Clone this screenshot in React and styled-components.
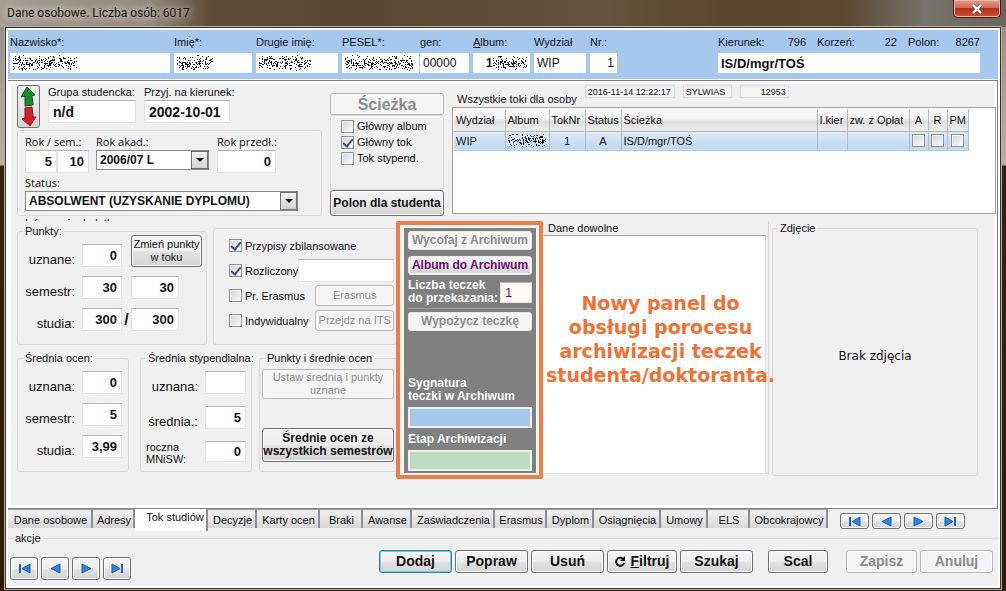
import React, { useId } from 'react';
import styled, { createGlobalStyle, css } from 'styled-components';

const GlobalStyle = createGlobalStyle`
  * {
    box-sizing: border-box;
  }
  body {
    margin: 0;
    font-family: "Liberation Sans", Arial, sans-serif;
    font-size: 11px;
    line-height: 14px;
    color: #111;
  }
  input, button, select {
    font: inherit;
    color: inherit;
    margin: 0;
  }
`;

// ---------- window frame ----------

const Frame = styled.div`
  min-height: 100vh;
  display: flex;
  flex-direction: column;
  padding: 0 5px 4px;
  background: linear-gradient(180deg, #8d8780 0, #a9a39c 100px, #b5afa8 165px, #33230f 166px, #2c1d0b 100%);
`;

const TitleBar = styled.header`
  display: flex;
  justify-content: space-between;
  align-items: flex-start;
  height: 27px;
  margin: 0 -5px;
  padding: 0 5px 0 7px;
  background: linear-gradient(90deg, #a59e95 0, #93897d 150px, #5f4c36 210px, #57452f 35%, #65533d 60%, #5a452c 72%, #5b4730 84%, #77726b 92%, #6c665e 100%);
`;

const Title = styled.h1`
  margin: 5px 0 0;
  font: 12px/16px Roboto, sans-serif;
  text-shadow: 0 0 6px #d8d2c8, 0 0 8px #d8d2c8;
`;

const CloseButton = styled.button`
  width: 48px;
  height: 18px;
  padding: 0;
  display: flex;
  justify-content: center;
  align-items: center;
  border: 1px solid #4b1a12;
  border-top: 0;
  border-radius: 0 0 5px 5px;
  background: linear-gradient(180deg, #e0a193 0, #cf6a56 45%, #b52d14 50%, #d0532f 100%);
  box-shadow: inset 0 0 0 1px #e9b3a6;
`;

const Client = styled.main`
  flex: 1;
  display: flex;
  flex-direction: column;
  border: 1px solid #333;
  outline: 1px solid #b9b1a6;
  background: #fff;
  padding: 2px;
`;

// ---------- basic controls ----------

const Input = styled.input`
  display: block;
  width: ${p => p.$w ? p.$w + 'px' : '100%'};
  height: ${p => p.$h || 23}px;
  min-width: 0;
  padding: 0 4px;
  border: 1px solid #e2e2e2;
  border-top-color: #b4b4b4;
  border-radius: 0;
  background: ${p => p.$bg || '#fff'};
  font-size: ${p => p.$size || 13}px;
  font-weight: ${p => p.$plain ? 400 : 700};
  text-align: ${p => p.$right ? 'right' : 'left'};
  outline: none;
`;

const HeaderInput = styled(Input)`
  height: 20px;
  border: 0;
  padding: 0 3px;
`;

const Button = styled.button`
  height: ${p => p.$h || 23}px;
  width: ${p => p.$w ? p.$w + 'px' : 'auto'};
  flex: none;
  padding: 0;
  border: 1px solid #707070;
  border-radius: 3px;
  background: linear-gradient(180deg, #f4f4f4 0, #eeeeee 48%, #e2e2e2 54%, #d4d4d4 100%);
  box-shadow: inset 0 0 0 1px #fafafa;
  font-size: ${p => p.$size || 12}px;
  font-weight: ${p => p.$plain ? 400 : 700};
  line-height: 13px;
  white-space: nowrap;
  ${p => p.$focus && css`
    border-color: #3c7f9b;
    box-shadow: inset 0 0 0 1px #5fd0e6;
  `}
  &:disabled {
    color: #8c8c8c;
    border-color: #b5b5b5;
    background: #f4f4f4;
  }
`;

const CheckInput = styled.input`
  appearance: none;
  position: relative;
  flex: none;
  width: 13px;
  height: 13px;
  border: 1px solid #8e8f8f;
  background: linear-gradient(135deg, #cfd3d8, #fbfbfb);
  box-shadow: inset 0 0 0 1px #f6f6f6;
  &:checked::after {
    content: "";
    position: absolute;
    left: 3px;
    top: 0;
    width: 4px;
    height: 8px;
    border: solid #3a4e86;
    border-width: 0 2px 2px 0;
    transform: rotate(40deg);
  }
`;

const CheckLabel = styled.label`
  display: flex;
  align-items: center;
  gap: 3px;
  height: 16px;
  white-space: nowrap;
`;

function Check({ label, checked }) {
  return (
    <CheckLabel>
      <CheckInput type="checkbox" defaultChecked={checked} />
      {label}
    </CheckLabel>
  );
}

const FieldBox = styled.div`
  flex: none;
  width: ${p => p.$w}px;
`;

const FieldLabel = styled.label`
  display: block;
  height: ${p => p.$h || 15}px;
  white-space: nowrap;
  ${p => p.$ui && css`
    font-family: "Open Sans", sans-serif;
  `}
`;

const SelectBox = styled.div`
  position: relative;
  width: ${p => p.$w}px;
`;

const Select = styled.select`
  appearance: none;
  display: block;
  width: 100%;
  height: 20px;
  padding: 0 20px 0 3px;
  border: 1px solid #8a8a8a;
  border-radius: 0;
  background: #fff;
  font-size: 12px;
  font-weight: 700;
`;

const SelectArrow = styled.span`
  position: absolute;
  right: 1px;
  top: 1px;
  width: 17px;
  height: 18px;
  display: flex;
  align-items: center;
  justify-content: center;
  border: 1px solid #707070;
  background: linear-gradient(180deg, #f4f4f4, #d2d2d2);
  pointer-events: none;
`;

function DropDown({ id, value, w }) {
  return (
    <SelectBox $w={w}>
      <Select id={id} defaultValue={value}>
        <option>{value}</option>
      </Select>
      <SelectArrow>
        <svg width="8" height="4" viewBox="0 0 8 4"><path d="M0 0h8L4 4z" fill="#111" /></svg>
      </SelectArrow>
    </SelectBox>
  );
}

// blurred out personal data: deterministic speckles
const ScribbleBox = styled.div`
  position: relative;
  width: 100%;
  svg {
    position: absolute;
    left: ${p => p.$left}px;
    top: 2px;
    pointer-events: none;
  }
`;

function Speckles({ w, h = 16, seed = 1 }) {
  let s = seed * 7919;
  const rnd = () => {
    s = (s * 16807) % 2147483647;
    return s / 2147483647;
  };
  let d = '';
  for (let i = 0; i < w * 4; i++) {
    const x = Math.floor(rnd() * w);
    const y = Math.floor(((rnd() + rnd()) / 2) * h);
    d += `M${x} ${y}h1v1h-1z`;
  }
  return <svg width={w} height={h} viewBox={`0 0 ${w} ${h}`} aria-hidden="true"><path d={d} fill="#1a1a1a" /></svg>;
}

// ---------- blue header ----------

const Header = styled.section`
  display: flex;
  padding: 5px 18px 6px 2px;
  background: #a6c8ef;
`;

const HeaderFields = styled.div`
  display: flex;
  gap: 4px;
`;

const PeselBox = styled.div`
  display: flex;
  gap: 1px;
`;

const KierunekBox = styled.div`
  width: 262px;
  margin-left: auto;
`;

const Codes = styled.div`
  display: grid;
  grid-template-columns: 88px 80px 1fr;
  height: 18px;
  column-gap: 11px;
`;

const Code = styled.div`
  display: flex;
  justify-content: space-between;
`;

function HeaderField({ label, value, w, seed, noise, left = 3, right, bold }) {
  const id = useId();
  return (
    <FieldBox $w={w}>
      <FieldLabel htmlFor={id} $h={18}>{label}</FieldLabel>
      <ScribbleBox $left={left}>
        <HeaderInput id={id} defaultValue={value} $plain={!bold} $size={12} $right={right} />
        {noise && <Speckles w={noise} seed={seed} />}
      </ScribbleBox>
    </FieldBox>
  );
}

// ---------- page panel ----------

const Panel = styled.section`
  display: flex;
  flex-direction: column;
  margin: 1px 0 0;
  border: solid #808080;
  border-width: 1px 1px 1px 0;
  box-shadow: inset 0 0 0 3px #fff;
  background: #f0f0f0;
  padding: 4px 1px 29px 9px;
`;

const Row = styled.div`
  display: flex;
  align-items: ${p => p.$align || 'flex-start'};
  gap: ${p => p.$gap || 0}px;
`;

const TopLeft = styled.div`
  flex: none;
  width: 305px;
`;

const StudentRow = styled(Row)`
  height: 45px;
`;

const ArrowsButton = styled.button`
  width: 23px;
  height: 43px;
  padding: 0;
  border: 1px solid #707070;
  border-radius: 3px;
  background: linear-gradient(180deg, #f4f4f4, #d4d4d4);
`;

const GroupBox = styled.div`
  border: 1px solid #d9d9d9;
  border-radius: 3px;
  box-shadow: inset 1px 1px 0 #fafafa;
`;

const YearBox = styled(GroupBox)`
  height: 86px;
  padding: 4px 7px 0;
`;

const Pair = styled.div`
  display: flex;
`;

const StatusLine = styled.div`
  margin-top: 3px;
`;

// the caption of the group below, mostly hidden under this one
const HiddenCaption = styled.div`
  height: 5px;
  padding-left: 8px;
  overflow: hidden;
`;

const PathColumn = styled.div`
  flex: none;
  display: flex;
  flex-direction: column;
  width: 114px;
  margin-top: 8px;
`;

const PathChecks = styled(GroupBox)`
  height: 75px;
  padding: 2px 10px;
`;

const TokiColumn = styled.div`
  flex: 1;
  min-width: 0;
  display: flex;
  flex-direction: column;
  height: 129px;
`;

const TokiHead = styled.div`
  display: flex;
  height: 22px;
  padding-left: 5px;
  gap: 8px;
`;

const TokiTitle = styled.h2`
  margin: 7px 0 0;
  font: inherit;
  white-space: nowrap;
`;

const Stamp = styled.output`
  flex: none;
  height: 13px;
  width: ${p => p.$w}px;
  padding: 0 2px;
  border: 1px solid #dcdcdc;
  background: #f4f4f4;
  font-size: 9px;
  line-height: 12px;
  text-align: ${p => p.$right ? 'right' : 'left'};
  white-space: nowrap;
`;

const TableBox = styled.div`
  flex: 1;
  padding: 1px 0 0 1px;
  border: 1px solid #a0a0a0;
  background: #fff;
`;

const Table = styled.table`
  width: 514px;
  table-layout: fixed;
  border-collapse: collapse;
  th, td {
    overflow: hidden;
    white-space: nowrap;
    padding: 0 2px;
    border-right: 1px solid #b4bac0;
  }
  th {
    height: 22px;
    font-weight: 400;
    text-align: left;
    border-bottom: 1px solid #b8b8b8;
    background: linear-gradient(180deg, #fafafa 0, #f2f2f2 45%, #dedede 55%, #ececec 100%);
  }
  td {
    height: 19px;
    border-bottom: 1px solid #a9c6e4;
    background: linear-gradient(180deg, #dfeaf6, #bdd7f0);
  }
  th.mid, td.mid {
    text-align: center;
  }
  input, svg {
    display: block;
    margin: 0 auto;
  }
`;

// ---------- lower half ----------

const Lower = styled.div`
  display: flex;
  align-items: flex-start;
`;

const LeftZone = styled.div`
  flex: none;
  width: 379px;
  padding-top: 3px;
  overflow: hidden;
`;

const Group = styled.fieldset`
  flex: none;
  width: ${p => p.$w}px;
  height: ${p => p.$h}px;
  min-width: 0;
  margin: 0 0 0 ${p => p.$ml || 0}px;
  padding: 0 ${p => p.$px === undefined ? 5 : p.$px}px;
  border: 1px solid #d9d9d9;
  border-radius: 3px;
`;

const Legend = styled.legend`
  height: 14px;
  margin-left: ${p => p.$ml || 0}px;
  padding: 0 2px;
  white-space: nowrap;
`;

const PointsGrid = styled.div`
  display: grid;
  grid-template-columns: ${p => p.$cols};
  row-gap: ${p => p.$gap || 9}px;
  margin-top: 6px;
`;

const BigLabel = styled.label`
  align-self: end;
  padding-right: 7px;
  font-size: 13px;
  line-height: 15px;
  text-align: right;
  white-space: nowrap;
`;

const SmallLabel = styled.label`
  align-self: center;
  line-height: 12px;
`;

const Slash = styled.span`
  width: 9px;
  align-self: center;
  font-size: 16px;
  font-weight: 700;
  text-align: center;
`;

const PointsButton = styled(Button)`
  align-self: end;
  margin-top: -9px;
`;

const OptionsBox = styled(GroupBox)`
  width: 190px;
  height: 117px;
  margin-top: 4px;
  padding: 4px 0 0 15px;
`;

const OptionRow = styled.div`
  display: flex;
  align-items: center;
  justify-content: space-between;
  height: 25px;
  padding-right: 2px;
`;

const AveragesRow = styled(Row)`
  margin-top: 6px;
`;

const AverageButtons = styled.div`
  display: flex;
  flex-direction: column;
  justify-content: space-between;
  height: 97px;
  padding-top: 4px;
`;

const Highlight = styled.section`
  flex: none;
  position: relative;
  width: 147px;
  height: 258px;
  padding: 3px 3px 2px 4px;
  border: 4px solid #f07c48;
  border-radius: 2px;
  background: #f4f4f0;
`;

const Archive = styled.div`
  display: flex;
  flex-direction: column;
  height: 100%;
  padding: 3px 4px 2px;
  background: #808080;
  color: #fff;
  font-size: 12px;
  font-weight: 700;
  line-height: 13px;
  white-space: nowrap;
`;

const ArchiveButton = styled(Button)`
  width: 100%;
  height: 19px;
  border-color: #e8e8e8;
  color: #6c0a72;
  &:disabled {
    border-color: #e8e8e8;
  }
`;

const ArchiveTop = styled.div`
  display: flex;
  flex-direction: column;
  gap: 6px;
  height: 78px;
  border-bottom: 1px solid #9a9a9a;
  margin-bottom: 3px;
`;

const FolderCount = styled.div`
  display: flex;
  align-items: center;
  justify-content: space-between;
  margin-top: -2px;
`;

const FolderInput = styled(Input)`
  color: #6c0a72;
  background: #fffaf2;
`;

const ArchiveBottom = styled.div`
  margin-top: auto;
`;

const ArchiveInput = styled(Input)`
  height: 21px;
  margin: 4px 0 5px;
  border: 2px solid #f0f0f0;
  &:last-child {
    margin-bottom: 0;
  }
`;

const FreeData = styled.section`
  flex: none;
  width: 226px;
  height: 253px;
  border-right: 1px solid #d9d9d9;
  border-bottom: 1px solid #d9d9d9;
`;

const SideTitle = styled.h2`
  height: 14px;
  margin: 0;
  padding-left: 5px;
  font: inherit;
`;

const FreeArea = styled.div`
  display: flex;
  justify-content: center;
  height: 239px;
  margin-right: 2px;
  border: 1px solid #a0a0a0;
  border-color: #a0a0a0 #e0e0e0 #e0e0e0 #fff;
  background: #fff;
  padding: 55px 0 0 12px;
`;

const Note = styled.p`
  margin: 0;
  flex: none;
  z-index: 1;
  font: bold 19px/24px "DejaVu Sans", Verdana, sans-serif;
  color: #ee7136;
  text-align: center;
  white-space: nowrap;
`;

const PhotoText = styled.p`
  margin: 112px 0 0;
  font: 12px/18px "DejaVu Sans", sans-serif;
  text-align: center;
`;

// ---------- tabs and actions ----------

const Footer = styled.footer`
  flex: 1;
  background: #f0f0f0;
`;

const TabRow = styled.div`
  display: flex;
  align-items: flex-start;
  justify-content: space-between;
  height: 22px;
`;

const Tabs = styled.nav`
  display: flex;
`;

const Tab = styled.button`
  width: ${p => p.$w}px;
  height: ${p => p.$active ? 22 : 19}px;
  padding: ${p => p.$active ? '0 2px 6px 11px' : '1px 1px 0 3px'};
  border: 0;
  border-right: 2px solid #8d8d96;
  border-top: ${p => p.$active ? 0 : '1px solid #a0a0a0'};
  background: ${p => p.$active ? '#fff' : 'linear-gradient(180deg, #f0f0f0 0, #e6e6e6 50%, #d6d6d8 100%)'};
  white-space: nowrap;
`;

const Actions = styled.fieldset`
  display: flex;
  justify-content: space-between;
  min-width: 0;
  margin: 0;
  padding: 4px 5px 6px 2px;
  border: 0;
  border-top: 1px solid #d9d9d9;
`;

const NavGroup = styled.div`
  display: flex;
  gap: 3px;
  margin: ${p => p.$bottom ? '8px 0 0' : '4px 33px 0 0'};
`;

const NavButton = styled(Button)`
  display: flex;
  align-items: center;
  justify-content: center;
`;

const ActionButtons = styled.div`
  display: flex;
  gap: 3px;
  padding-top: 1px;
`;

const ActionButton = styled(Button)`
  margin-left: ${p => p.$ml || 0}px;
  svg {
    vertical-align: -1px;
    margin-right: 5px;
  }
`;

const navPaths = {
  'Pierwszy': ['M1 1h2v9h-2z', 'M12 1v9L4 5.500z'],
  'Poprzedni': ['', 'M11 1v9L2 5.500z'],
  'Następny': ['', 'M2 1v9L11 5.500z'],
  'Ostatni': ['M10 1h2v9h-2z', 'M1 1v9L9 5.500z'],
};

function Navigator({ bottom }) {
  return (
    <NavGroup $bottom={bottom}>
      {Object.keys(navPaths).map(name => (
        <NavButton key={name} aria-label={name} $w={bottom ? 28 : 29} $h={bottom ? 23 : 16}>
          <svg width="13" height="11" viewBox="0 0 13 11">
            <path d={navPaths[name][0]} fill="#1c66b4" />
            <path d={navPaths[name][1]} fill="#2f86d6" stroke="#1b5ea8" strokeWidth="1" strokeLinejoin="round" />
          </svg>
        </NavButton>
      ))}
    </NavGroup>
  );
}

const tabs = [
  ['Dane osobowe', 85], ['Adresy', 42], ['Tok studiów', 73], ['Decyzje', 49], ['Karty ocen', 63],
  ['Braki', 43], ['Awanse', 49], ['Zaświadczenia', 83], ['Erasmus', 52], ['Dyplom', 47],
  ['Osiągnięcia', 67], ['Umowy', 47], ['ELS', 42], ['Obcokrajowcy', 78],
];

const columns = [
  ['Wydział', 51], ['Album', 44], ['TokNr', 36], ['Status', 36], ['Ścieżka', 196],
  ['I.kier', 30], ['zw. z Opłat', 62], ['A', 19], ['R', 19], ['PM', 21],
];

function TextField({ label, value, w, size, right, ui }) {
  const id = useId();
  return (
    <FieldBox $w={w}>
      <FieldLabel htmlFor={id} $ui={ui}>{label}</FieldLabel>
      <Input id={id} defaultValue={value} $size={size} $right={right} />
    </FieldBox>
  );
}

function TokiTable() {
  return (
    <Table>
      <colgroup>
        {columns.map(([name, w]) => <col key={name} width={w} />)}
      </colgroup>
      <thead>
        <tr>
          {columns.map(([name], i) => <th key={name} className={i > 6 ? 'mid' : ''}>{name}</th>)}
        </tr>
      </thead>
      <tbody>
        <tr>
          <td>WIP</td>
          <td><Speckles w={38} h={15} seed={9} /></td>
          <td className="mid">1</td>
          <td className="mid">A</td>
          <td>IS/D/mgr/TOŚ</td>
          <td />
          <td />
          <td><CheckInput type="checkbox" aria-label="A" /></td>
          <td><CheckInput type="checkbox" aria-label="R" /></td>
          <td><CheckInput type="checkbox" aria-label="PM" /></td>
        </tr>
      </tbody>
    </Table>
  );
}

function ArchivePanel() {
  return (
    <Highlight>
      <Archive>
        <ArchiveTop>
          <ArchiveButton disabled>Wycofaj z Archiwum</ArchiveButton>
          <ArchiveButton>Album do Archiwum</ArchiveButton>
          <FolderCount>
            <label htmlFor="teczki">Liczba teczek<br />do przekazania:</label>
            <FolderInput id="teczki" defaultValue="1" $w={32} $h={21} $plain />
          </FolderCount>
        </ArchiveTop>
        <ArchiveButton disabled>Wypożycz teczkę</ArchiveButton>
        <ArchiveBottom>
          <label htmlFor="sygnatura">Sygnatura<br />teczki w Archiwum</label>
          <ArchiveInput id="sygnatura" $bg="#a6c8ef" />
          <label htmlFor="etap">Etap Archiwizacji</label>
          <ArchiveInput id="etap" $bg="#bedcc0" />
        </ArchiveBottom>
      </Archive>
    </Highlight>
  );
}

export default function App() {
  return (
    <Frame>
      <GlobalStyle />
      <TitleBar>
        <Title>Dane osobowe. Liczba osób: 6017</Title>
        <CloseButton aria-label="Zamknij">
          <svg width="12" height="10" viewBox="0 0 12 10">
            <path d="M2 1l8 8M10 1l-8 8" stroke="#6b2a20" strokeWidth="4" />
            <path d="M2 1l8 8M10 1l-8 8" stroke="#fff" strokeWidth="2.500" />
          </svg>
        </CloseButton>
      </TitleBar>
      <Client>
        <Header>
          <HeaderFields>
            <HeaderField label="Nazwisko*:" w={160} noise={64} seed={2} />
            <HeaderField label="Imię*:" w={78} noise={36} seed={3} />
            <HeaderField label="Drugie imię:" w={82} noise={52} seed={4} />
            <PeselBox>
              <HeaderField label="PESEL*:" w={77} noise={68} seed={5} />
              <HeaderField label="gen:" w={49} value="00000" />
            </PeselBox>
            <HeaderField label={<><u>A</u>lbum:</>} w={57} value="   1" noise={34} seed={6} left={20} bold />
            <HeaderField label="Wydział" w={52} value="WIP" />
            <HeaderField label="Nr.:" w={27} value="1" right />
          </HeaderFields>
          <KierunekBox>
            <Codes>
              <Code><label htmlFor="kierunek">Kierunek:</label><span>796</span></Code>
              <Code><span>Korzeń:</span><span>22</span></Code>
              <Code><span>Polon:</span><span>8267</span></Code>
            </Codes>
            <HeaderInput id="kierunek" defaultValue="IS/D/mgr/TOŚ" />
          </KierunekBox>
        </Header>

        <Panel>
          <Row $gap={8}>
            <TopLeft>
              <StudentRow $gap={8}>
                <ArrowsButton aria-label="Zmień grupę">
                  <svg width="21" height="41" viewBox="0 0 21 41">
                    <path d="M9 1l8 8-3 1 1 9-8 1 0-10-4 1z" fill="#1c8a2c" stroke="#0b5a18" />
                    <path d="M7 22l7-1 1 10 3 0-6 9-8-7 3-1z" fill="#d01f26" stroke="#8e1014" />
                  </svg>
                </ArrowsButton>
                <TextField label="Grupa studencka:" value="n/d" w={88} size={14} />
                <TextField label="Przyj. na kierunek:" value="2002-10-01" w={86} size={14} />
              </StudentRow>
              <YearBox>
                <Row $gap={7}>
                  <FieldBox $w={64}>
                    <FieldLabel htmlFor="rok" $ui>Rok / sem.:</FieldLabel>
                    <Pair>
                      <Input id="rok" defaultValue="5" $w={32} $right />
                      <Input aria-label="Semestr" defaultValue="10" $w={32} $right />
                    </Pair>
                  </FieldBox>
                  <FieldBox $w={114}>
                    <FieldLabel htmlFor="akad" $ui>Rok akad.:</FieldLabel>
                    <DropDown id="akad" value="2006/07 L" w={113} />
                  </FieldBox>
                  <TextField label="Rok przedł.:" value="0" w={59} right ui />
                </Row>
                <StatusLine>
                  <FieldLabel htmlFor="status" $ui>Status:</FieldLabel>
                  <DropDown id="status" value="ABSOLWENT (UZYSKANIE DYPLOMU)" w={273} />
                </StatusLine>
              </YearBox>
              <HiddenCaption>Informacje dodatkowe</HiddenCaption>
            </TopLeft>

            <PathColumn>
              <Button disabled $size={16} $h={22}>Ścieżka</Button>
              <PathChecks>
                <Check label="Główny album" />
                <Check label="Główny tok" checked />
                <Check label="Tok stypend." />
              </PathChecks>
              <Button $h={26}>Polon dla studenta</Button>
            </PathColumn>

            <TokiColumn>
              <TokiHead>
                <TokiTitle>Wszystkie toki dla osoby</TokiTitle>
                <Stamp $w={90}>2016-11-14 12:22:17</Stamp>
                <Stamp $w={49}>SYLWIAS</Stamp>
                <Stamp $w={49} $right>12953</Stamp>
              </TokiHead>
              <TableBox>
                <TokiTable />
              </TableBox>
            </TokiColumn>
          </Row>

          <Lower>
            <LeftZone>
              <Row $gap={6}>
                <Group $w={190} $h={121}>
                  <Legend>Punkty:</Legend>
                  <PointsGrid $cols="59px 40px 9px 71px">
                    <BigLabel htmlFor="p1">uznane:</BigLabel>
                    <Input id="p1" defaultValue="0" $right />
                    <span />
                    <PointsButton $plain $size={11} $h={32}>Zmień punkty<br />w toku</PointsButton>
                    <BigLabel htmlFor="p2">semestr:</BigLabel>
                    <Input id="p2" defaultValue="30" $right />
                    <span />
                    <Input aria-label="Punkty semestr" defaultValue="30" $w={48} $right />
                    <BigLabel htmlFor="p3">studia:</BigLabel>
                    <Input id="p3" defaultValue="300" $right />
                    <Slash>/</Slash>
                    <Input aria-label="Punkty studia" defaultValue="300" $w={48} $right />
                  </PointsGrid>
                </Group>
                <OptionsBox>
                  <OptionRow><Check label="Przypisy zbilansowane" checked /></OptionRow>
                  <OptionRow>
                    <Check label="Rozliczony" checked />
                    <Input aria-label="Rozliczony opis" $w={96} />
                  </OptionRow>
                  <OptionRow>
                    <Check label="Pr. Erasmus" />
                    <Button disabled $plain $size={11} $w={79} $h={21}>Erasmus</Button>
                  </OptionRow>
                  <OptionRow>
                    <Check label="Indywidualny" />
                    <Button disabled $plain $size={11} $w={79} $h={21}>Przejdz na ITS</Button>
                  </OptionRow>
                </OptionsBox>
              </Row>
              <AveragesRow>
                <Group $w={112} $h={121}>
                  <Legend>Średnia ocen:</Legend>
                  <PointsGrid $cols="59px 40px">
                    <BigLabel htmlFor="s1">uznana:</BigLabel>
                    <Input id="s1" defaultValue="0" $right />
                    <BigLabel htmlFor="s2">semestr:</BigLabel>
                    <Input id="s2" defaultValue="5" $right />
                    <BigLabel htmlFor="s3">studia:</BigLabel>
                    <Input id="s3" defaultValue="3,99" $right />
                  </PointsGrid>
                </Group>
                <Group $w={112} $h={121} $ml={11}>
                  <Legend>Średnia stypendialna:</Legend>
                  <PointsGrid $cols="59px 41px" $gap={12}>
                    <BigLabel htmlFor="t1">uznana:</BigLabel>
                    <Input id="t1" $right />
                    <BigLabel htmlFor="t2">średnia.:</BigLabel>
                    <Input id="t2" defaultValue="5" $right />
                    <SmallLabel htmlFor="t3">roczna<br />MNiSW:</SmallLabel>
                    <Input id="t3" defaultValue="0" $h={21} $right />
                  </PointsGrid>
                </Group>
                <Group $w={138} $h={121} $px={2} $ml={7}>
                  <Legend $ml={3}>Punkty i średnie ocen</Legend>
                  <AverageButtons>
                    <Button disabled $plain $size={11} $h={30}>Ustaw średnią i punkty<br />uznane</Button>
                    <Button $h={34}>Średnie ocen ze<br />wszystkich semestrów</Button>
                  </AverageButtons>
                </Group>
              </AveragesRow>
            </LeftZone>

            <ArchivePanel />

            <FreeData>
              <SideTitle>Dane dowolne</SideTitle>
              <FreeArea>
                <Note>
                  Nowy panel do<br />
                  obsługi porocesu<br />
                  archiwizacji teczek<br />
                  studenta/doktoranta.
                </Note>
              </FreeArea>
            </FreeData>
            <Group $w={206} $h={255} $ml={3}>
              <Legend>Zdjęcie</Legend>
              <PhotoText>Brak zdjęcia</PhotoText>
            </Group>
          </Lower>
        </Panel>

        <Footer>
          <TabRow>
            <Tabs>
              {tabs.map(([name, w]) => (
                <Tab key={name} $w={w} $active={name === 'Tok studiów'}>{name}</Tab>
              ))}
            </Tabs>
            <Navigator />
          </TabRow>
          <Actions>
            <Legend $ml={3}>akcje</Legend>
            <Navigator bottom />
            <ActionButtons>
              <ActionButton $size={14} $w={73} $focus>Dodaj</ActionButton>
              <ActionButton $size={14} $w={73}>Popraw</ActionButton>
              <ActionButton $size={14} $w={73}>Usuń</ActionButton>
              <ActionButton $size={14} $w={70}>
                <svg width="11" height="11" viewBox="0 0 11 11">
                  <path d="M8 3A4 4 0 1 0 9 7" fill="none" stroke="#111" strokeWidth="2" />
                  <path d="M10 0v5H5z" fill="#111" />
                </svg>
                <u>F</u>iltruj
              </ActionButton>
              <ActionButton $size={14} $w={73}>Szukaj</ActionButton>
              <ActionButton $size={14} $w={60} $ml={12}>Scal</ActionButton>
              <ActionButton $size={14} $w={71} $ml={15} disabled>Zapisz</ActionButton>
              <ActionButton $size={14} $w={73} disabled>Anuluj</ActionButton>
            </ActionButtons>
          </Actions>
        </Footer>
      </Client>
    </Frame>
  );
}
